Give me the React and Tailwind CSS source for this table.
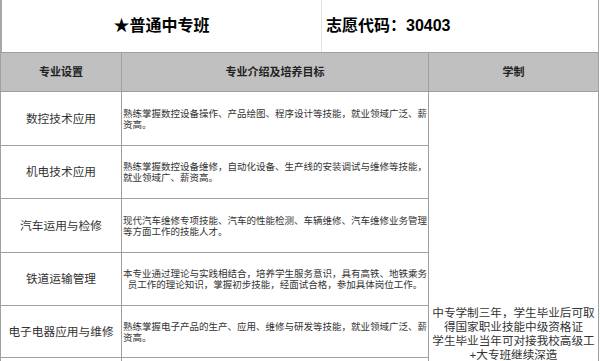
import React from "react";

const rows = [
  {
    name: "数控技术应用",
    desc: "熟练掌握数控设备操作、产品绘图、程序设计等技能，就业领域广泛、薪资高。",
    h: "h-[54px]",
  },
  {
    name: "机电技术应用",
    desc: "熟练掌握数控设备维修，自动化设备、生产线的安装调试与维修等技能，就业领域广、薪资高。",
    h: "h-[53px]",
  },
  {
    name: "汽车运用与检修",
    desc: "现代汽车维修专项技能、汽车的性能检测、车辆维修、汽车维修业务管理等方面工作的技能人才。",
    h: "h-[54px]",
  },
  {
    name: "铁道运输管理",
    desc: "本专业通过理论与实践相结合，培养学生服务意识，具有高铁、地铁乘务员工作的理论知识，掌握初步技能，经面试合格，参加具体岗位工作。",
    h: "h-[53px]",
    center: true,
  },
  {
    name: "电子电器应用与维修",
    desc: "熟练掌握电子产品的生产、应用、维修与研发等技能，就业领域广泛、薪资高。",
    h: "h-[52px]",
  },
];

export default function App() {
  return (
    <div className="w-[600px] h-[361px] overflow-hidden bg-white font-['Liberation_Sans','Noto_Sans_CJK_SC',sans-serif] text-[#333]">
      {/* title row */}
      <div className="flex h-[52px] w-[599px] border-l-2 border-r border-[#a8a8a8]">
        <div className="w-[320px] flex items-center justify-center border-r border-[#e4e4e4]">
          <span className="text-[16px] font-bold text-black">★普通中专班</span>
        </div>
        <div className="flex-1 flex items-center pl-[4px]">
          <span className="text-[16px] font-bold text-black">志愿代码：30403</span>
        </div>
      </div>

      <table className="w-[599px] table-fixed border-collapse">
        <colgroup>
          <col className="w-[121px]" />
          <col className="w-[307px]" />
          <col />
        </colgroup>
        <thead>
          <tr className="h-[39px] bg-[#c0c0c0]">
            <th className="border border-[#a0a0a0] text-[11px] font-bold text-[#222]">专业设置</th>
            <th className="border border-[#a0a0a0] text-[11px] font-bold text-[#222]">专业介绍及培养目标</th>
            <th className="border border-[#a0a0a0] text-[11px] font-bold text-[#222]">学制</th>
          </tr>
        </thead>
        <tbody>
          {rows.map((r, i) => (
            <tr key={r.name} className={r.h}>
              <td className="border border-[#a0a0a0] text-center text-[11.7px] whitespace-nowrap">{r.name}</td>
              <td
                className={`border border-[#a0a0a0] px-[1px] text-[9.5px] leading-[11px] ${r.center ? "text-center" : "text-left"}`}
              >
                {r.desc}
              </td>
              {i === 0 && (
                <td rowSpan={6} className="border border-[#a0a0a0] align-bottom pb-[45px] text-center text-[11.6px] leading-[14px] whitespace-nowrap">
                  中专学制三年，学生毕业后可取
                  <br />
                  得国家职业技能中级资格证
                  <br />
                  学生毕业当年可对接我校高级工
                  <br />
                  +大专班继续深造
                </td>
              )}
            </tr>
          ))}
          <tr className="h-[50px]">
            <td className="border border-[#a0a0a0]"></td>
            <td className="border border-[#a0a0a0]"></td>
          </tr>
        </tbody>
      </table>
    </div>
  );
}
